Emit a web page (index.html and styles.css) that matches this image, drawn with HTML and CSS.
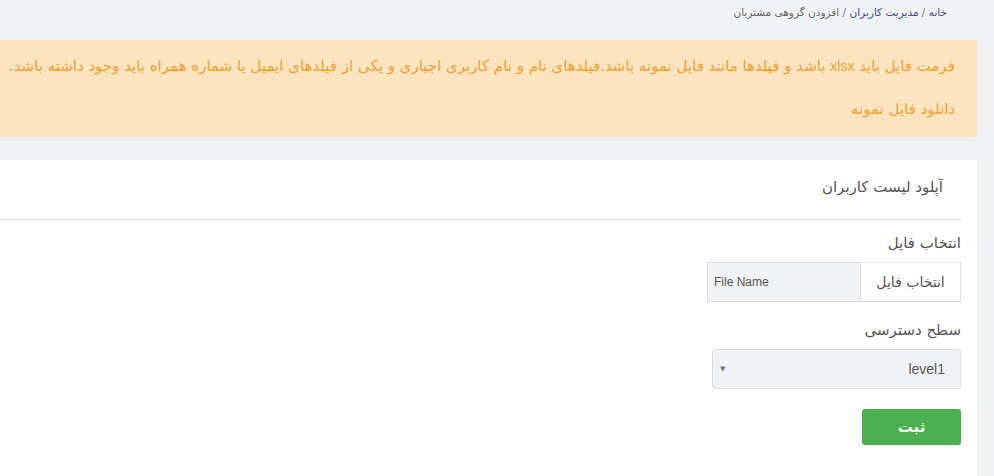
FILE: index.html
```html
<!DOCTYPE html>
<html lang="fa" dir="rtl">
<head>
<meta charset="utf-8">
<link rel="stylesheet" href="styles.css">
</head>
<body>
<div class="page">
  <div class="breadcrumb"><a class="crumb-link">خانه</a> / <a class="crumb-link">مدیریت کاربران</a> / <span class="crumb-current">افزودن گروهی مشتریان</span></div>
  <div class="alert">
    <p class="alert-line">فرمت فایل باید <span class="latin">xlsx</span> باشد و فیلدها مانند فایل نمونه باشد.فیلدهای نام و نام کاربری اجباری و یکی از فیلدهای ایمیل یا شماره همراه باید وجود داشته باشد.</p>
    <p class="alert-line">دانلود فایل نمونه</p>
  </div>
  <div class="card">
    <div class="card-header">آپلود لیست کاربران</div>
    <div class="card-body">
      <div class="field">
        <label class="label">انتخاب فایل</label>
        <div class="file-group">
          <span class="file-btn">انتخاب فایل</span>
          <span class="file-name">File Name</span>
        </div>
      </div>
      <div class="field">
        <label class="label">سطح دسترسی</label>
        <div class="select"><span class="select-value">level1</span><span class="select-arrow">▼</span></div>
      </div>
      <button class="submit">ثبت</button>
    </div>
  </div>
</div>
</body>
</html>
```

FILE: styles.css
```css
html, body {
  margin: 0;
  padding: 0;
  background: #f1f2f4;
  overflow: hidden;
  font-family: "DejaVu Sans", "Noto Sans", sans-serif;
}
.page {
  width: 987px;
  margin-left: -10px;
  margin-right: 17px;
  direction: rtl;
}
.breadcrumb {
  height: 40px;
  padding-right: 30px;
  padding-top: 4px;
  box-sizing: border-box;
  font-size: 10.5px;
  color: #777;
  line-height: 16px;
}
.crumb-link { color: #3b4a9a; }
.crumb-current { color: #666; }
.alert {
  background: #fde4c0;
  border-radius: 3px;
  padding: 14px 22px 14px 0;
  height: 97px;
  box-sizing: border-box;
  color: #f0a133;
  font-size: 15px;
}
.alert-line {
  margin: 0;
  line-height: 24px;
  white-space: nowrap;
}
.latin {
  font-family: "Liberation Sans", Arial, sans-serif;
  font-size: 14px;
}
.alert-line + .alert-line { margin-top: 19px; }
.card {
  margin-top: 23px;
  background: #fff;
  height: 320px;
}
.card-header {
  margin-right: 15px;
  height: 60px;
  border-bottom: 1px solid #e0e0e0;
  box-sizing: border-box;
  padding-right: 19px;
  padding-top: 18px;
  font-size: 15px;
  color: #555;
}
.card-body {
  padding: 13px 16px 0 0;
  display: flex;
  flex-direction: column;
  align-items: flex-start;
}
.field { display: flex; flex-direction: column; align-items: flex-start; }
.label {
  font-size: 15px;
  color: #555;
  line-height: 20px;
  margin-bottom: 9px;
}
.file-group {
  display: flex;
  height: 40px;
  width: 254px;
  box-sizing: border-box;
  border: 1px solid #ddd;
  margin-bottom: 18px;
}
.file-btn {
  width: 99px;
  background: #fff;
  border-left: 1px solid #ddd;
  display: flex;
  align-items: center;
  justify-content: center;
  font-size: 14px;
  color: #555;
}
.file-name {
  flex: 1;
  background: #f1f2f4;
  display: flex;
  align-items: center;
  direction: ltr;
  justify-content: flex-start;
  padding-left: 6px;
  font-family: "Liberation Sans", Arial, sans-serif;
  font-size: 12px;
  color: #555;
}
.select {
  width: 249px;
  height: 40px;
  box-sizing: border-box;
  border: 1px solid #ddd;
  border-radius: 3px;
  background: #f1f2f4;
  display: flex;
  align-items: center;
  justify-content: space-between;
  padding: 0 15px 0 7px;
  margin-bottom: 20px;
}
.select-value {
  font-family: "Liberation Sans", Arial, sans-serif;
  font-size: 14px;
  color: #555;
}
.select-arrow { font-size: 7px; color: #777; }
.submit {
  width: 99px;
  height: 36px;
  border: none;
  border-radius: 3px;
  background: #4caf50;
  color: #fff;
  font-family: "DejaVu Sans", sans-serif;
  font-weight: bold;
  font-size: 15px;
}
```
